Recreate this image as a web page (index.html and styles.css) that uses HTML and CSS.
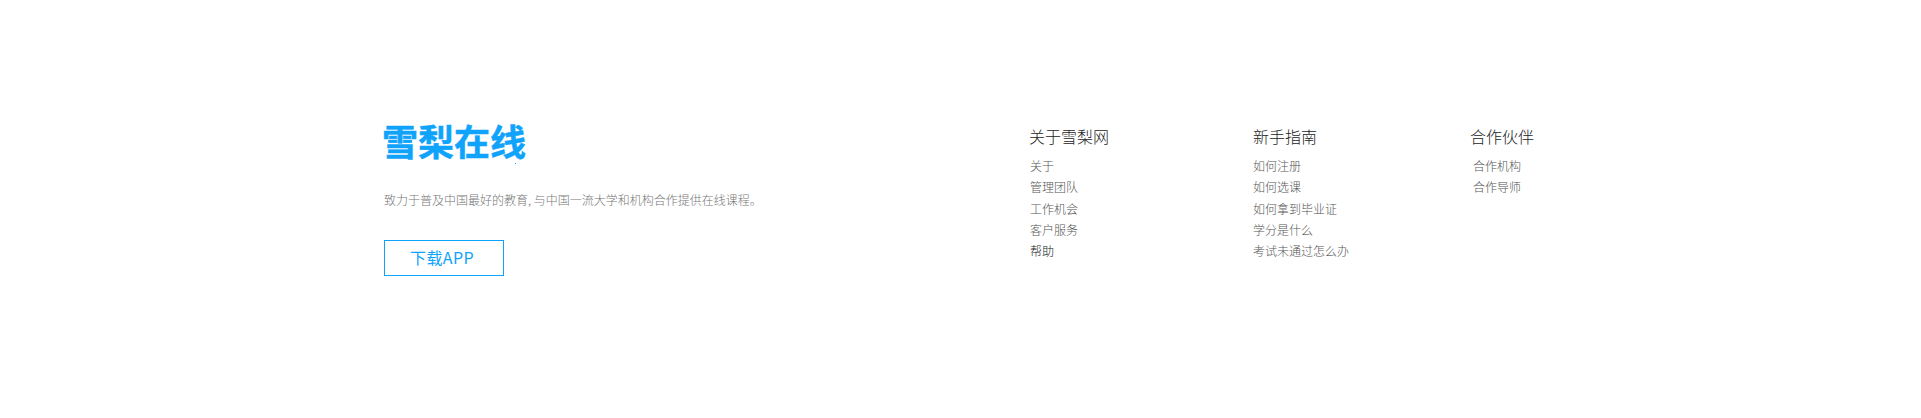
FILE: index.html
```html
<!DOCTYPE html>
<html lang="zh">
<head>
<meta charset="utf-8">
<title>雪梨在线</title>
<link rel="stylesheet" href="styles.css">
</head>
<body>
<footer class="footer">
  <div class="brand">
    <div class="logo">雪梨在线</div>
    <div class="logo-dot"></div>
    <p class="desc">致力于普及中国最好的教育, 与中国一流大学和机构合作提供在线课程。</p>
    <a class="app-btn">下载APP</a>
  </div>
  <div class="col col-about">
    <h4>关于雪梨网</h4>
    <ul>
      <li>关于</li>
      <li>管理团队</li>
      <li>工作机会</li>
      <li>客户服务</li>
      <li class="dark">帮助</li>
    </ul>
  </div>
  <div class="col col-guide">
    <h4>新手指南</h4>
    <ul>
      <li>如何注册</li>
      <li>如何选课</li>
      <li>如何拿到毕业证</li>
      <li>学分是什么</li>
      <li>考试未通过怎么办</li>
    </ul>
  </div>
  <div class="col col-partner">
    <h4>合作伙伴</h4>
    <ul>
      <li>合作机构</li>
      <li>合作导师</li>
    </ul>
  </div>
</footer>
</body>
</html>
```
FILE: styles.css
```css
* { box-sizing: border-box; }
html, body { margin: 0; background: #fff; }
body {
  height: 418px;
  overflow: hidden;
  font-family: "Noto Sans CJK SC", "Liberation Sans", sans-serif;
}
.footer {
  display: flex;
  padding: 118px 0 0 384px;
}
.brand { width: 645px; }
.logo {
  margin: 2px 0 0 -2px;
  font-size: 36px;
  line-height: 40px;
  font-weight: 700;
  color: #10a3fb;
  -webkit-text-stroke: 0.5px #10a3fb;
}
.logo-dot {
  width: 1px;
  height: 1px;
  margin: 3px 0 0 131px;
  background: #10a3fb;
}
.desc {
  margin: 27px 0 0;
  font-size: 12px;
  line-height: 18px;
  font-weight: 300;
  color: #777;
  white-space: nowrap;
}
.app-btn {
  display: block;
  width: 120px;
  height: 36px;
  margin-top: 31px;
  padding-right: 4px;
  border: 1px solid #10a3fb;
  font-size: 16px;
  letter-spacing: 0.4px;
  line-height: 32px;
  text-align: center;
  font-weight: 400;
  color: #10a3fb;
}
.col h4 {
  margin: 8px 0 0;
  font-size: 16px;
  line-height: 21px;
  font-weight: 300;
  color: #222;
  white-space: nowrap;
}
.col ul {
  list-style: none;
  margin: 8px 0 0;
  padding: 0;
}
.col li {
  height: 21.25px;
  font-size: 12px;
  line-height: 21px;
  font-weight: 300;
  color: #555;
  white-space: nowrap;
}
.col li.dark { color: #222; }
.col-about { width: 224px; }
.col-about ul { padding-left: 1px; }
.col-guide { width: 218px; }
.col-partner { margin-left: -1px; }
.col-partner ul { padding-left: 3px; }
```
